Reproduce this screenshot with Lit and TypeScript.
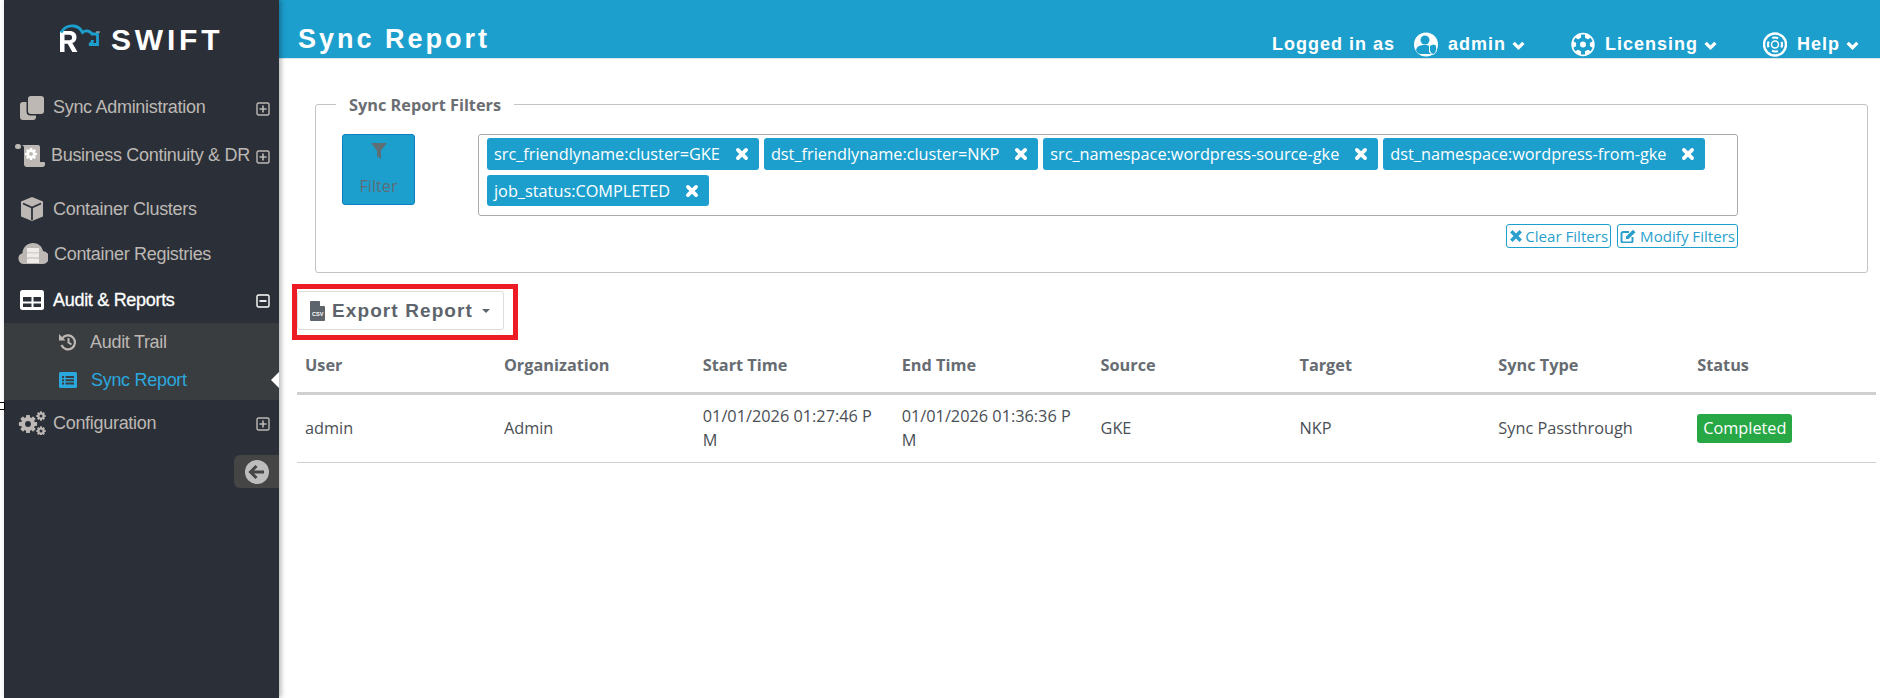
import { LitElement, html, css, svg } from "lit";
import { customElement } from "lit/decorators.js";

const plus = html`<svg class="tog" viewBox="0 0 14 14"><rect x="1" y="1" width="12" height="12" rx="1.5" fill="none" stroke="currentColor" stroke-width="1.4"/><path d="M3.5 7h7M7 3.5v7" stroke="currentColor" stroke-width="1.6"/></svg>`;
const minus = html`<svg class="tog" viewBox="0 0 14 14"><rect x="1" y="1" width="12" height="12" rx="1.5" fill="none" stroke="currentColor" stroke-width="1.4"/><path d="M3.5 7h7" stroke="currentColor" stroke-width="1.8"/></svg>`;
const chev = html`<svg class="chev" viewBox="0 0 12 8"><path d="M1.5 1.5 6 6l4.500-4.500" fill="none" stroke="#fff" stroke-width="3"/></svg>`;
const times = html`<svg class="x" viewBox="0 0 12 12"><path d="M2.500 2.500l7 7M9.500 2.500l-7 7" stroke="currentColor" stroke-width="3.200" stroke-linecap="round"/></svg>`;

const gear = (cx: number, cy: number, r: number, hole: string) => {
  const teeth = [0, 45, 90, 135].map(
    (a) => svg`<rect x=${cx - r * 0.28} y=${cy - r * 1.3} width=${r * 0.56} height=${r * 2.6} rx=${r * 0.1} transform="rotate(${a} ${cx} ${cy})" fill="currentColor"/>`
  );
  return svg`${teeth}<circle cx=${cx} cy=${cy} r=${r} fill="currentColor"/><circle cx=${cx} cy=${cy} r=${r * 0.42} fill=${hole}/>`;
};

const tags = [
  "src_friendlyname:cluster=GKE",
  "dst_friendlyname:cluster=NKP",
  "src_namespace:wordpress-source-gke",
  "dst_namespace:wordpress-from-gke",
  "job_status:COMPLETED",
];
const cols = ["User", "Organization", "Start Time", "End Time", "Source", "Target", "Sync Type", "Status"];

@customElement("app-root")
export class AppRoot extends LitElement {
  static styles = css`
    :host { display: block; height: 698px; overflow: hidden; background: #fff; font-family: "Open Sans", sans-serif; position: relative; }
    .page { display: flex; height: 698px; padding-left: 4px; box-sizing: border-box; }
    .side { width: 275px; flex: none; background: #2b3038; position: relative; box-shadow: 2px 0 5px rgba(0,0,0,.3); z-index: 2; font-family: "Liberation Sans", sans-serif; color: #bdb8b4; font-size: 18px; letter-spacing: -0.3px; }
    .logo { height: 84px; box-sizing: border-box; padding: 24px 0 0 56px; display: flex; align-items: flex-start; gap: 10px; }
    .logo svg { width: 41px; height: 28px; flex: none; }
    .logo span { font-weight: 700; font-size: 30px; line-height: 30px; color: #fff; letter-spacing: 3.800px; margin-top: 1px; }
    .item { display: flex; align-items: center; padding: 0 9px 0 16px; box-sizing: border-box; white-space: nowrap; }
    .i1 { height: 47px; } .i2 { height: 49px; padding-left: 11px; } .i3 { height: 56px; padding-top: 2px; } .i4 { height: 36px; padding-left: 14px; } .i5 { height: 51px; padding-top: 5px; } .i6 { height: 46px; padding-left: 13px; }
    .ic { width: 24px; height: 24px; flex: none; margin-right: 9px; }
    .ic.w30 { width: 30px; margin-right: 6px; }
    .tog { width: 14px; height: 14px; margin-left: auto; flex: none; position: relative; top: 1px; }
    .item.on { color: #fff; -webkit-text-stroke: .3px #fff; }
    .item.on svg { -webkit-text-stroke: 0; }
    .sub { background: #3a3d40; height: 77px; position: relative; }
    .subi { height: 38px; display: flex; align-items: center; padding-left: 54px; gap: 12px; }
    .subi svg { width: 20px; height: 20px; flex: none; }
    .subi.cur { color: #2aa8de; gap: 13px; }
    .notch { position: absolute; right: 0; top: 49px; width: 0; height: 0; border: 8px solid transparent; border-right-color: #fff; border-left-width: 0; }
    .coll { margin: 9px 0 0 auto; width: 45px; height: 33px; background: #454545; border-radius: 6px 0 0 6px; display: flex; align-items: center; justify-content: center; }
    .coll svg { width: 24px; height: 24px; }
    .main { flex: 1; min-width: 0; display: flex; flex-direction: column; padding-right: 2px; }
    .top { height: 59px; flex: none; background: #1d9fce; border-bottom: 1px solid #d8e4ea; box-sizing: border-box; display: flex; align-items: flex-end; color: #fff; font-family: "Liberation Sans", sans-serif; font-weight: 700; padding-left: 19px; }
    .title { font-size: 27px; letter-spacing: 3px; line-height: 32px; padding-bottom: 3px; flex: 1; }
    .nav { display: flex; align-items: center; font-size: 18px; letter-spacing: 1px; height: 26px; margin-bottom: 1px; }
    .nav svg.ni { width: 24px; height: 25px; margin-right: 10px; flex: none; }
    .chev { width: 13px; height: 9px; margin-left: 6px; margin-top: 2px; }
    .li { margin-right: 19px; }
    .ns { display: flex; align-items: center; margin-right: 46px; }
    .ns.last { margin-right: 21px; }
    .body { padding: 0 4px 0 18px; }
    .fs { margin: 45px 8px 0 18px; height: 169px; border: 1px solid #c4c4c4; border-radius: 3px; box-sizing: border-box; position: relative; padding: 29px 129px 0 26px; display: flex; align-items: flex-start; }
    .lg { position: absolute; left: 20px; top: -10px; background: #fff; padding: 0 13px; font-weight: 700; font-size: 16.300px; line-height: 20px; color: #6a6e73; }
    .fbtn { width: 73px; height: 71px; flex: none; background: #1d9fce; border: 1px solid #0e7ec4; border-radius: 3px; box-sizing: border-box; display: flex; flex-direction: column; align-items: center; color: #5f6d75; font-size: 16.300px; padding-top: 7px; margin-right: 63px; }
    .fbtn svg { width: 18px; height: 18px; margin-bottom: 15px; }
    .fr { flex: 1; display: flex; flex-direction: column; align-items: stretch; }
    .box { height: 82px; border: 1px solid #aaa; border-radius: 3px; box-sizing: border-box; padding: 3px 8px; display: flex; flex-wrap: wrap; align-content: flex-start; gap: 5px; }
    .tag { height: 32px; background: #1d9fce; color: #fff; border-radius: 3px; display: flex; align-items: center; padding: 0 10px 0 7px; font-size: 16.300px; gap: 15px; box-sizing: border-box; }
    .tag:last-child { height: 31px; }
    .x { width: 14px; height: 14px; flex: none; }
    .acts { display: flex; justify-content: flex-end; gap: 6px; margin-top: 8px; }
    .act { height: 24px; border: 1px solid #1d9fce; border-radius: 3px; box-sizing: border-box; color: #2a9fcc; font-size: 15.100px; display: flex; align-items: center; padding: 0 2px; gap: 2px; }
    .act svg { width: 14px; height: 14px; flex: none; }
    .act svg.ed { width: 18px; }
    .exp { margin: 11px 0 0 -5px; width: 226px; height: 56px; border: 5px solid #ed1c24; box-sizing: border-box; padding: 2px 9px 5px 0; }
    .eb { height: 100%; border: 1px solid #ddd; border-radius: 3px; box-sizing: border-box; display: flex; align-items: center; padding-left: 12px; color: #5d646c; font-family: "Liberation Sans", sans-serif; font-weight: 700; font-size: 19px; letter-spacing: 1.100px; white-space: nowrap; }
    .eb svg { width: 15px; height: 20px; margin-right: 7px; flex: none; }
    .eb svg text { font: 700 5.500px "Liberation Sans", sans-serif; letter-spacing: 0; fill: #fff; }
    .car { width: 0; height: 0; border: 4px solid transparent; border-top-color: #5d646c; border-bottom-width: 0; margin-left: 9px; }
    table { border-collapse: collapse; table-layout: fixed; width: 1579px; color: #4a4f55; font-size: 16.300px; }
    th { text-align: left; font-weight: 700; color: #666c72; padding: 0 8px 2px; height: 53px; border-bottom: 3px solid #d0d0d0; box-sizing: border-box; }
    th:not(:last-child) { width: 198.900px; }
    td { padding: 0 8px; height: 69px; border-bottom: 1px solid #d0d0d0; word-break: break-all; line-height: 24px; box-sizing: border-box; }
    .badge { display: inline-block; background: #28a745; color: #fff; border-radius: 3px; padding: 0 6px; line-height: 29px; word-break: normal; white-space: nowrap; }
    .mark { position: absolute; left: -3px; top: 402px; width: 8px; height: 8px; border: 1px solid #000; box-sizing: border-box; background: #fff; z-index: 3; }
  `;

  render() {
    return html`<div class="page">
      <aside class="side">
        <div class="logo">
          <svg viewBox="0 0 41 28">
            <path d="M0 28V7h9.500c4.500 0 7 2.400 7 6.200 0 2.900-1.500 5-4.200 5.800L17.500 28h-5.200l-4.600-8.200H4.500V28zM4.500 10.700v5.500h4.600c2 0 3-1 3-2.700s-1-2.800-3-2.800z" fill="#fff"/>
            <path d="M1 8.500C4 3.500 9 1.300 14 2c4 .6 7 3.300 8.500 6.500 3-2.500 7.500-2 9.500 1.500h5.500v10.500H29c2.500-.5 3.500-2 3.500-4.500" fill="none" stroke="#1d9fce" stroke-width="2.800"/>
            <path d="M36 8h4" stroke="#ccc" stroke-width="1"/>
          </svg>
          <span>SWIFT</span>
        </div>
        <div class="item i1">
          <svg class="ic" viewBox="0 0 24 24"><path d="M8 3a3 3 0 0 1 3-3h10a3 3 0 0 1 3 3v12a3 3 0 0 1-3 3H11a3 3 0 0 1-3-3z" fill="currentColor"/><path d="M6.500 6H3a3 3 0 0 0-3 3v12a3 3 0 0 0 3 3h10a3 3 0 0 0 3-3v-1.500h-5.500a4 4 0 0 1-4-4z" fill="currentColor"/></svg>
          Sync Administration${plus}
        </div>
        <div class="item i2">
          <svg class="ic w30" viewBox="0 0 30 24"><rect x="0" y="0" width="6" height="5" rx="2.500" fill="currentColor"/><path d="M6 1h17a2 2 0 0 1 2 2v15h4c1 0 1.500 1 1 3-.5 1.500-1.500 2-3 2H12c-2 0-3-1-3-3V4c0-2-1-3-3-3z" fill="currentColor"/><g color="#fff">${gear(16, 10, 4.600, "#bdb8b4")}</g></svg>
          Business Continuity &amp; DR${plus}
        </div>
        <div class="item i3">
          <svg class="ic" viewBox="0 0 24 24"><path d="M12 0 1 4.500v15L12 24l11-4.500v-15z" fill="currentColor"/><path d="M3 6.500l9 4 9-4M12 10.500V23" fill="none" stroke="#2b3038" stroke-width="1.800"/></svg>
          Container Clusters
        </div>
        <div class="item i4">
          <svg class="ic w30" viewBox="0 0 30 24"><path d="M6 22a5.500 5.500 0 0 1-1.500-10.800C4.500 5 10 1 15 1c5 0 9 3 10 8a6.500 6.500 0 0 1-1 13z" fill="currentColor"/><path d="M9 6h12v4.400H9zM9 11.300h12v4.200H9zM9 16.400h12V21H9z" fill="#efece9"/></svg>
          Container Registries
        </div>
        <div class="item i5 on">
          <svg class="ic" viewBox="0 0 24 24"><rect x="0" y="2" width="24" height="20" rx="2.500" fill="#fff"/><path d="M3 9h8.500v4.500H3zM13.500 9H21v4.500h-7.500zM3 15.500h8.500V19H3zM13.500 15.500H21V19h-7.500z" fill="#2b3038"/></svg>
          Audit &amp; Reports${minus}
        </div>
        <div class="sub">
          <div class="subi">
            <svg viewBox="0 0 20 20"><path d="M4.200 6.500A7 7 0 1 1 3.500 13" fill="none" stroke="currentColor" stroke-width="2.200"/><path d="M1 2v6.500h6.500z" fill="currentColor"/><path d="M10.500 6v4.500l3 2" fill="none" stroke="currentColor" stroke-width="2"/></svg>
            Audit Trail
          </div>
          <div class="subi cur">
            <svg viewBox="0 0 20 20"><rect x="1" y="2" width="18" height="16" rx="1.500" fill="currentColor"/><path d="M4 6h2v2H4zM7.500 6H16v2H7.500zM4 9.200h2v2H4zM7.500 9.200H16v2H7.500zM4 12.400h2v2H4zM7.500 12.400H16v2H7.500z" fill="#3a3d40"/></svg>
            Sync Report
          </div>
          <div class="notch"></div>
        </div>
        <div class="item i6">
          <svg class="ic w30" viewBox="0 0 30 24">${gear(11, 13, 7, "#2b3038")}${gear(24, 5, 3.600, "#2b3038")}${gear(24, 20, 3.600, "#2b3038")}</svg>
          Configuration${plus}
        </div>
        <div class="coll">
          <svg viewBox="0 0 24 24"><circle cx="12" cy="12" r="12" fill="#bdbdbd"/><path d="M19 12H6M11.500 6 5.500 12l6 6" fill="none" stroke="#454545" stroke-width="3"/></svg>
        </div>
      </aside>
      <main class="main">
        <header class="top">
          <div class="title">Sync Report</div>
          <div class="nav">
            <span class="li">Logged in as</span>
            <svg class="ni" viewBox="0 0 24 25"><circle cx="12" cy="12.500" r="12" fill="#fff"/><circle cx="11" cy="8" r="4.500" fill="#1d9fce"/><path d="M2 18c1-4 4-5 9-5 2 0 3 .3 4 .8V20l2 2H6c-2-1-3.500-2-4-4z" fill="#1d9fce"/><path d="M15.500 13.500l4-1.500 3 1.500v4c0 2.500-1.500 4-3.500 5-2-1-3.500-2.500-3.500-5z" fill="#1d9fce" stroke="#fff"/></svg>
            <span class="ns">admin${chev}</span>
            <svg class="ni" viewBox="0 0 24 25"><circle cx="12" cy="12.500" r="11.700" fill="#fff"/><g>${[0, 60, 120].map((a) => svg`<rect x="10" y="2.500" width="4" height="20" fill="#1d9fce" transform="rotate(${a} 12 12.500)"/>`)}</g><circle cx="12" cy="12.500" r="7" fill="#1d9fce"/><circle cx="12" cy="12.500" r="3" fill="#fff"/></svg>
            <span class="ns">Licensing${chev}</span>
            <svg class="ni" viewBox="0 0 24 25"><circle cx="12" cy="12.500" r="11" fill="none" stroke="#fff" stroke-width="2.400"/><circle cx="12" cy="12.500" r="7" fill="none" stroke="#fff" stroke-width="2.200" stroke-dasharray="6 5" stroke-dashoffset="3"/><circle cx="12" cy="12.500" r="3.500" fill="none" stroke="#fff" stroke-width="1.500"/></svg>
            <span class="ns last">Help${chev}</span>
          </div>
        </header>
        <div class="body">
          <div class="fs">
            <div class="lg">Sync Report Filters</div>
            <div class="fbtn">
              <svg viewBox="0 0 18 18"><path d="M1 1h16l-6 7.500V17l-4-3V8.500z" fill="currentColor"/></svg>
              Filter
            </div>
            <div class="fr">
              <div class="box">
                ${tags.map((t) => html`<span class="tag">${t}${times}</span>`)}
              </div>
              <div class="acts">
                <span class="act"><svg viewBox="0 0 12 12"><path d="M2 2l8 8M10 2l-8 8" stroke="currentColor" stroke-width="3"/></svg>Clear Filters</span>
                <span class="act"><svg class="ed" viewBox="0 0 18 14"><path d="M9 3H3a1.500 1.500 0 0 0-1.500 1.500v7.500A1.500 1.500 0 0 0 3 13.500h8a1.500 1.500 0 0 0 1.500-1.500V8" fill="none" stroke="currentColor" stroke-width="2"/><path d="M6 7.500 13 .800l2.500 2.500L8.500 10H6z" fill="currentColor"/></svg>Modify Filters</span>
              </div>
            </div>
          </div>
          <div class="exp">
            <div class="eb">
              <svg viewBox="0 0 15 20"><path d="M1 0h8.500L15 5.500V19a1 1 0 0 1-1 1H1a1 1 0 0 1-1-1V1a1 1 0 0 1 1-1z" fill="#5d646c"/><path d="M10 0v5h5z" fill="#fff"/><text x="2" y="15">CSV</text></svg>
              Export Report<span class="car"></span>
            </div>
          </div>
          <table>
            <thead><tr>${cols.map((c) => html`<th>${c}</th>`)}</tr></thead>
            <tbody><tr>
              <td>admin</td><td>Admin</td>
              <td>01/01/2026 01:27:46 PM</td><td>01/01/2026 01:36:36 PM</td>
              <td>GKE</td><td>NKP</td><td>Sync Passthrough</td>
              <td><span class="badge">Completed</span></td>
            </tr></tbody>
          </table>
        </div>
      </main>
      <div class="mark"></div>
    </div>`;
  }
}
